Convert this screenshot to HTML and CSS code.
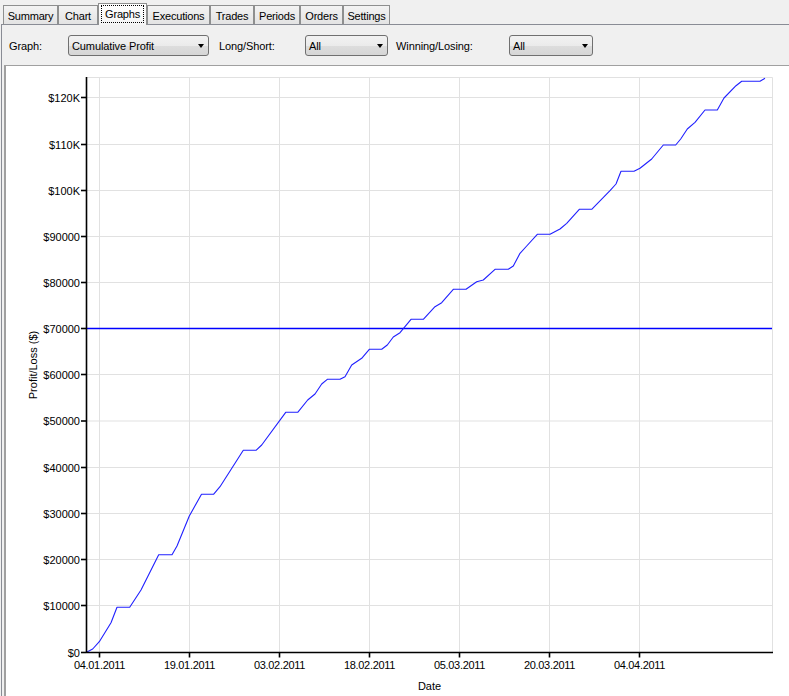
FILE: index.html
```html
<!DOCTYPE html>
<html>
<head>
<meta charset="utf-8">
<title>Graphs</title>
<link rel="stylesheet" href="styles.css">
</head>
<body>
<div class="tabs">
  <div class="tab w-summary">Summary</div>
  <div class="tab w-chart">Chart</div>
  <div class="tab active w-graphs"><span class="focus">Graphs</span></div>
  <div class="tab w-exec">Executions</div>
  <div class="tab w-trades">Trades</div>
  <div class="tab w-periods">Periods</div>
  <div class="tab w-orders">Orders</div>
  <div class="tab w-settings">Settings</div>
</div>
<div class="panel">
  <div class="controls">
    <span class="label l-graph">Graph:</span>
    <div class="combo c-graph"><span>Cumulative Profit</span><i class="arrow"></i></div>
    <span class="label l-ls">Long/Short:</span>
    <div class="combo c-ls"><span>All</span><i class="arrow"></i></div>
    <span class="label l-wl">Winning/Losing:</span>
    <div class="combo c-wl"><span>All</span><i class="arrow"></i></div>
  </div>
  <div class="chartbox">
    <svg class="chart" width="781" height="630" viewBox="6 66 781 630" xmlns="http://www.w3.org/2000/svg">
      <g class="grid">
        <line x1="86" y1="77.5" x2="772.5" y2="77.5"/>
        <line x1="772.5" y1="77.5" x2="772.5" y2="652"/>
        <line x1="86" y1="97.5" x2="772" y2="97.5"/>
        <line x1="86" y1="144.5" x2="772" y2="144.5"/>
        <line x1="86" y1="190.5" x2="772" y2="190.5"/>
        <line x1="86" y1="236.5" x2="772" y2="236.5"/>
        <line x1="86" y1="282.5" x2="772" y2="282.5"/>
        <line x1="86" y1="328.5" x2="772" y2="328.5"/>
        <line x1="86" y1="374.5" x2="772" y2="374.5"/>
        <line x1="86" y1="421" x2="772" y2="421"/>
        <line x1="86" y1="467.5" x2="772" y2="467.5"/>
        <line x1="86" y1="513.5" x2="772" y2="513.5"/>
        <line x1="86" y1="559.5" x2="772" y2="559.5"/>
        <line x1="86" y1="605.5" x2="772" y2="605.5"/>
        <line x1="99.5" y1="77" x2="99.5" y2="652"/>
        <line x1="189.5" y1="77" x2="189.5" y2="652"/>
        <line x1="279.5" y1="77" x2="279.5" y2="652"/>
        <line x1="369.5" y1="77" x2="369.5" y2="652"/>
        <line x1="459.5" y1="77" x2="459.5" y2="652"/>
        <line x1="549.5" y1="77" x2="549.5" y2="652"/>
        <line x1="639.5" y1="77" x2="639.5" y2="652"/>
      </g>
      <line class="hline" x1="86" y1="328.5" x2="772" y2="328.5"/>
      <polyline class="curve" points="86,652.5 92.7,649 99.3,641.7 111,622.7 117,607.3 129.7,607.3 141,590 158.7,554.7 172,554.7 177,546 189.3,516 201.5,494.3 213.5,494.3 220,486.7 243.3,450.3 256,450.3 261.7,445 285.7,412.3 297.7,412.3 307.7,400 315,394 321.7,384 327.3,379.3 340,379.3 345,376.7 351.7,365 361.7,358.3 369.3,349.3 381.7,349.3 387.3,345 393.3,337 400,332.7 411,319.3 423.3,319.3 435,306.7 441.7,302.7 453.3,289.3 466,289.3 476.7,281.7 483.3,280 495,269.3 508.3,269.3 513.3,266 520,253.3 526.7,246 537.3,234.3 550,234.3 560,229 566.7,223.3 579.3,209.3 591.7,209.3 610,190.7 616,184 621,171.3 634,171.3 640,168.3 651.7,159 663.3,145 675.7,145 680.7,139 687.3,129 695,122.3 705,110 717.3,110 724,98 736,85.7 741.7,81.3 760,81.3 765,78.3"/>
      <g class="axis">
        <line x1="86.5" y1="77" x2="86.5" y2="653"/>
        <line x1="86" y1="652.5" x2="773" y2="652.5"/>
        <line x1="81" y1="97.5" x2="86" y2="97.5"/>
        <line x1="81" y1="144.5" x2="86" y2="144.5"/>
        <line x1="81" y1="190.5" x2="86" y2="190.5"/>
        <line x1="81" y1="236.5" x2="86" y2="236.5"/>
        <line x1="81" y1="282.5" x2="86" y2="282.5"/>
        <line x1="81" y1="328.5" x2="86" y2="328.5"/>
        <line x1="81" y1="374.5" x2="86" y2="374.5"/>
        <line x1="81" y1="421" x2="86" y2="421"/>
        <line x1="81" y1="467.5" x2="86" y2="467.5"/>
        <line x1="81" y1="513.5" x2="86" y2="513.5"/>
        <line x1="81" y1="559.5" x2="86" y2="559.5"/>
        <line x1="81" y1="605.5" x2="86" y2="605.5"/>
        <line x1="81" y1="652.5" x2="86" y2="652.5"/>
        <line x1="99.5" y1="652" x2="99.5" y2="657.5"/>
        <line x1="189.5" y1="652" x2="189.5" y2="657.5"/>
        <line x1="279.5" y1="652" x2="279.5" y2="657.5"/>
        <line x1="369.5" y1="652" x2="369.5" y2="657.5"/>
        <line x1="459.5" y1="652" x2="459.5" y2="657.5"/>
        <line x1="549.5" y1="652" x2="549.5" y2="657.5"/>
        <line x1="639.5" y1="652" x2="639.5" y2="657.5"/>
      </g>
      <g class="ylabels">
        <text x="80" y="101.5">$120K</text>
        <text x="80" y="148.5">$110K</text>
        <text x="80" y="194.5">$100K</text>
        <text x="80" y="240.5">$90000</text>
        <text x="80" y="286.5">$80000</text>
        <text x="80" y="332.5">$70000</text>
        <text x="80" y="378.5">$60000</text>
        <text x="80" y="425">$50000</text>
        <text x="80" y="471.5">$40000</text>
        <text x="80" y="517.5">$30000</text>
        <text x="80" y="563.5">$20000</text>
        <text x="80" y="609.5">$10000</text>
        <text x="80" y="656.5">$0</text>
      </g>
      <g class="xlabels">
        <text x="99.5" y="668.5">04.01.2011</text>
        <text x="189.5" y="668.5">19.01.2011</text>
        <text x="279.5" y="668.5">03.02.2011</text>
        <text x="369.5" y="668.5">18.02.2011</text>
        <text x="459.5" y="668.5">05.03.2011</text>
        <text x="549.5" y="668.5">20.03.2011</text>
        <text x="639.5" y="668.5">04.04.2011</text>
      </g>
      <text class="title" x="429.5" y="690">Date</text>
      <text class="title" transform="translate(36.5 365) rotate(-90)">Profit/Loss ($)</text>
    </svg>
  </div>
</div>
</body>
</html>
```

FILE: styles.css
```css
html, body {
  margin: 0;
  padding: 0;
}
body {
  width: 789px;
  height: 696px;
  overflow: hidden;
  background: #f0f0f0;
  font-family: "Liberation Sans", Arial, sans-serif;
  font-size: 11px;
  color: #000;
}
.tabs {
  display: flex;
  align-items: flex-end;
  height: 24px;
  padding-left: 3px;
  position: relative;
  z-index: 1;
}
.tab {
  box-sizing: border-box;
  height: 19px;
  border: 1px solid #8e8f8f;
  border-bottom: none;
  background: linear-gradient(#f3f3f3, #e3e3e3);
  display: flex;
  align-items: center;
  justify-content: center;
  padding-top: 1px;
  letter-spacing: -0.2px;
  white-space: nowrap;
}
.tab.active {
  height: 22px;
  margin-bottom: -1px;
  background: linear-gradient(#ffffff, #f4f4f4);
  padding: 1px 2px 2px 2px;
  align-items: stretch;
}
.focus {
  flex: 1;
  border: 1px dotted #000;
  display: flex;
  align-items: center;
  justify-content: center;
  padding-bottom: 1px;
}
.w-summary { width: 55px; }
.w-chart { width: 40px; }
.w-graphs { width: 49px; }
.w-exec { width: 63px; }
.w-trades { width: 44px; }
.w-periods { width: 46px; }
.w-orders { width: 43px; }
.w-settings { width: 47px; }

.panel {
  margin-left: 1px;
  border-top: 1px solid #898c95;
  border-left: 1px solid #898c95;
  background: #f0f0f0;
  height: 680px;
}
.controls {
  display: flex;
  align-items: center;
  height: 21px;
  padding: 10px 0 0 7px;
}
.label {
  white-space: nowrap;
  letter-spacing: -0.1px;
}
.l-graph { width: 59px; }
.l-ls { width: 86px; margin-left: 10px; }
.l-wl { width: 113px; margin-left: 8px; }
.combo {
  box-sizing: border-box;
  height: 21px;
  border: 1px solid #707070;
  border-radius: 3px;
  background: linear-gradient(#f2f2f2 0%, #ebebeb 50%, #dddddd 51%, #d6d6d6 100%);
  display: flex;
  align-items: center;
  justify-content: space-between;
  padding: 0 4px 0 3px;
  letter-spacing: -0.1px;
}
.c-graph { width: 141px; }
.c-ls { width: 83px; }
.c-wl { width: 84px; }
.arrow {
  width: 0;
  height: 0;
  border-left: 3.5px solid transparent;
  border-right: 3.5px solid transparent;
  border-top: 4px solid #000;
  margin-top: 1px;
}
.chartbox {
  margin: 9px 0 0 2px;
  width: 783px;
  height: 640px;
  border-top: 1px solid #a0a0a0;
  border-left: 2px solid #a0a0a0;
  border-right: 1px solid #dcdcdc;
  background: #fff;
}
.chart {
  display: block;
}
.grid line {
  stroke: #e1e1e1;
  stroke-width: 1;
}
.axis line {
  stroke: #000;
  stroke-width: 1.6;
}
.hline {
  stroke: #0000ff;
  stroke-width: 1.4;
}
.curve {
  fill: none;
  stroke: #2020ff;
  stroke-width: 1.1;
  stroke-linejoin: round;
}
.ylabels text {
  font-family: "Liberation Sans", Arial, sans-serif;
  font-size: 11px;
  text-anchor: end;
  fill: #000;
}
.xlabels text {
  font-family: "Liberation Sans", Arial, sans-serif;
  font-size: 11px;
  text-anchor: middle;
  fill: #000;
  letter-spacing: -0.3px;
}
.title {
  font-family: "Liberation Sans", Arial, sans-serif;
  font-size: 11px;
  text-anchor: middle;
  fill: #000;
}
```
